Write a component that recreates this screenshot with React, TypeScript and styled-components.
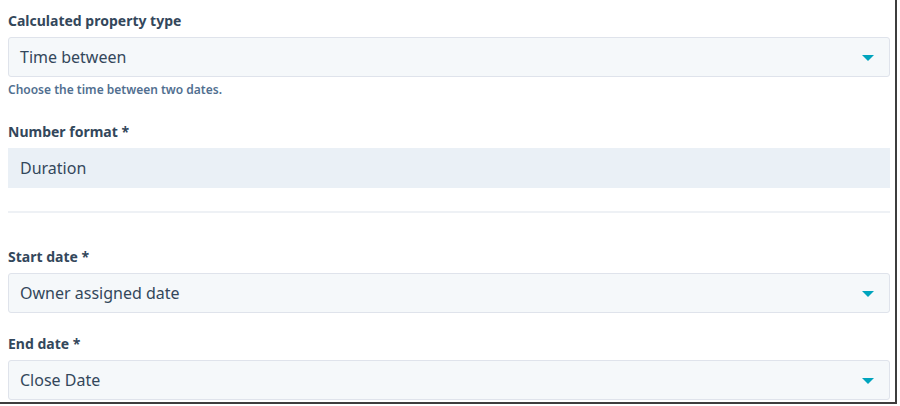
import styled, { createGlobalStyle } from "styled-components";

const GlobalStyle = createGlobalStyle`
  html, body {
    margin: 0;
    padding: 0;
    background: #fff;
  }
  body {
    font-family: "Noto Sans", "Liberation Sans", sans-serif;
    color: #33475b;
  }
`;

const Frame = styled.div`
  box-sizing: border-box;
  width: 897px;
  height: 404px;
  border-right: 2px solid #3d3d3d;
  border-bottom: 2px solid #3d3d3d;
  padding: 11px 5px 0 8px;
  overflow: hidden;
`;

const Field = styled.div<{ $gap?: number }>`
  display: flex;
  flex-direction: column;
  margin-top: ${({ $gap }) => $gap ?? 0}px;
`;

const Label = styled.label`
  font-size: 14px;
  font-weight: 700;
  line-height: 20px;
  color: #33475b;
  margin-bottom: 6px;
`;

const Select = styled.div`
  box-sizing: border-box;
  height: 40px;
  display: flex;
  align-items: center;
  justify-content: space-between;
  padding: 0 15px 0 11px;
  background: #f5f8fa;
  border: 1px solid #dfe3eb;
  border-radius: 3px;
  font-size: 16px;
  color: #33475b;
`;

const ReadOnly = styled(Select)`
  background: #eaf0f6;
  border-color: #eaf0f6;
  border-radius: 0;
`;

const Caret = styled.span`
  width: 0;
  height: 0;
  border-left: 6px solid transparent;
  border-right: 6px solid transparent;
  border-top: 6px solid #00a4bd;
  margin-top: 1px;
`;

const Help = styled.div`
  font-size: 12px;
  font-weight: 600;
  line-height: 16px;
  color: #516f90;
  margin-top: 5px;
`;

const Divider = styled.hr`
  border: none;
  height: 2px;
  background: #eef1f5;
  margin: 23px 0 0;
`;

function Dropdown({ value }: { value: string }) {
  return (
    <Select>
      <span>{value}</span>
      <Caret />
    </Select>
  );
}

export default function App() {
  return (
    <>
      <GlobalStyle />
      <Frame>
        <Field>
          <Label>Calculated property type</Label>
          <Dropdown value="Time between" />
          <Help>Choose the time between two dates.</Help>
        </Field>
        <Field $gap={24}>
          <Label>Number format *</Label>
          <ReadOnly>
            <span>Duration</span>
          </ReadOnly>
        </Field>
        <Divider />
        <Field $gap={34}>
          <Label>Start date *</Label>
          <Dropdown value="Owner assigned date" />
        </Field>
        <Field $gap={21}>
          <Label>End date *</Label>
          <Dropdown value="Close Date" />
        </Field>
      </Frame>
    </>
  );
}
